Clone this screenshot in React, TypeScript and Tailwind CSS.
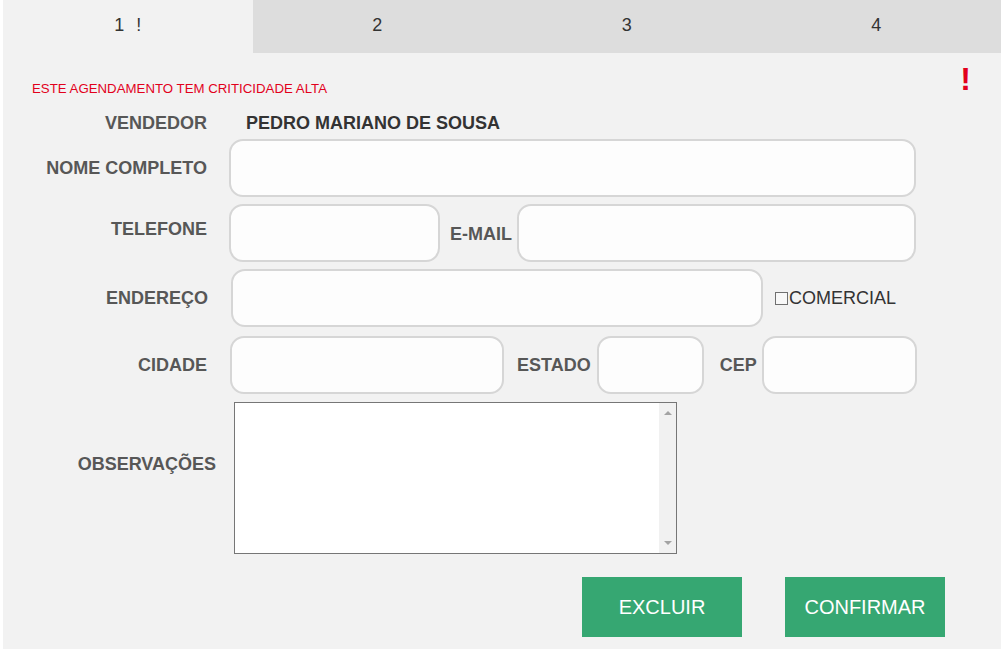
import { useState } from 'react';

const tabs = ['1', '2', '3', '4'];

function Label({ children, className = '' }: { children: React.ReactNode; className?: string }) {
    return (
        <div className={`shrink-0 text-right text-[18px] font-bold leading-[22px] text-[#575757] ${className}`}>
            {children}
        </div>
    );
}

function Field({ className = '' }: { className?: string }) {
    return (
        <input
            type="text"
            className={`h-[58px] shrink-0 rounded-[14px] border-2 border-[#d6d6d6] bg-[#fdfdfd] px-3 text-[18px] outline-none ${className}`}
        />
    );
}

export default function App() {
    const [comercial, setComercial] = useState(false);
    const [active, setActive] = useState(0);

    return (
        <div className="ml-[3px] h-[649px] w-[998px] bg-[#f2f2f2] font-['Liberation_Sans',Arial,sans-serif]">
            {/* Tabs */}
            <div className="flex h-[53px]">
                {tabs.map((t, i) => (
                    <button
                        key={t}
                        onClick={() => setActive(i)}
                        className={`flex flex-1 items-center justify-center pb-[2px] text-[18px] text-[#333] ${active === i ? 'bg-[#f2f2f2]' : 'bg-[#dddddd]'}`}
                    >
                        {t}
                        {i === 0 && <span className="ml-[12px]">!</span>}
                    </button>
                ))}
            </div>

            {/* Alert */}
            <div className="flex h-[46px] items-start justify-between pl-[29px] pr-[30px]">
                <div className="mt-[28px] text-[13.25px] leading-[15px] text-[#e2001c]">
                    ESTE AGENDAMENTO TEM CRITICIDADE ALTA
                </div>
                <div className="mt-[10px] text-[32px] font-bold leading-none text-[#e2001c]">!</div>
            </div>

            {/* Vendedor */}
            <div className="mt-[13px] flex items-center">
                <Label className="w-[204px]">VENDEDOR</Label>
                <div className="ml-[39px] text-[18px] font-bold leading-[22px] text-[#333]">PEDRO MARIANO DE SOUSA</div>
            </div>

            {/* Nome completo */}
            <div className="mt-[5px] flex items-center">
                <Label className="w-[204px]">NOME COMPLETO</Label>
                <Field className="ml-[22px] w-[687px]" />
            </div>

            {/* Telefone / E-mail */}
            <div className="mt-[7px] flex items-center">
                <Label className="mb-[8px] w-[204px]">TELEFONE</Label>
                <Field className="ml-[22px] w-[211px]" />
                <Label className="ml-[10px] mt-[2px]">E-MAIL</Label>
                <Field className="ml-[5px] w-[399px]" />
            </div>

            {/* Endereço */}
            <div className="mt-[7px] flex items-center">
                <Label className="w-[205px]">ENDEREÇO</Label>
                <Field className="ml-[23px] w-[532px]" />
                <label className="ml-[12px] flex cursor-pointer items-center text-[18px] leading-[22px] text-[#333]">
                    <input
                        type="checkbox"
                        checked={comercial}
                        onChange={(e) => setComercial(e.target.checked)}
                        className="m-0 h-[13px] w-[13px] appearance-none border border-[#707070] bg-[#f8f8f8] checked:bg-[#36a772]"
                    />
                    <span className="ml-[1px]">COMERCIAL</span>
                </label>
            </div>

            {/* Cidade / Estado / CEP */}
            <div className="mt-[9px] flex items-center">
                <Label className="w-[204px]">CIDADE</Label>
                <Field className="ml-[23px] w-[274px]" />
                <Label className="ml-[13px]">ESTADO</Label>
                <Field className="ml-[6px] w-[107px]" />
                <Label className="ml-[16px]">CEP</Label>
                <Field className="ml-[5px] w-[155px]" />
            </div>

            {/* Observações */}
            <div className="mt-[8px] flex items-center">
                <Label className="mb-[28px] w-[213px]">OBSERVAÇÕES</Label>
                <div className="ml-[18px] flex h-[152px] w-[443px] border border-[#767676] bg-white">
                    <textarea className="h-full flex-1 resize-none overflow-hidden bg-white p-1 text-[14px] outline-none" />
                    {/* scrollbar track */}
                    <div className="flex w-[17px] flex-col items-center justify-between bg-[#f1f1f1] py-[7px]">
                        <svg width="8" height="5" viewBox="0 0 8 5">
                            <path d="M0 5 L4 1 L8 5 Z" fill="#a3a3a3" />
                        </svg>
                        <svg width="8" height="5" viewBox="0 0 8 5">
                            <path d="M0 0 L4 4 L8 0 Z" fill="#a3a3a3" />
                        </svg>
                    </div>
                </div>
            </div>

            {/* Actions */}
            <div className="mt-[23px] flex pl-[579px]">
                <button className="h-[60px] w-[160px] bg-[#36a772] text-[20px] text-white">EXCLUIR</button>
                <button className="ml-[43px] h-[60px] w-[160px] bg-[#36a772] text-[20px] text-white">CONFIRMAR</button>
            </div>
        </div>
    );
}
